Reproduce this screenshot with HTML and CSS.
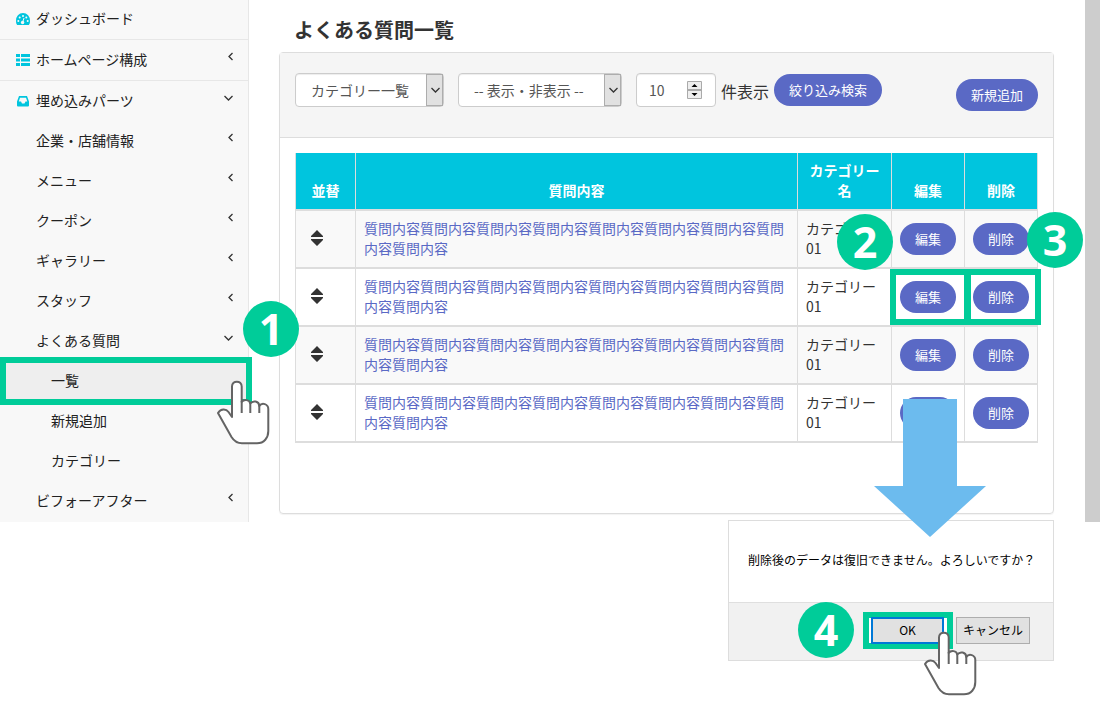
FILE: index.html
```html
<!DOCTYPE html>
<html lang="ja">
  <head>
    <meta charset="UTF-8" />
    <title>よくある質問一覧</title>
    <link rel="stylesheet" href="styles.css" />
  </head>
  <body>
    <svg class="defs" width="0" height="0">
      <symbol id="left" viewBox="0 0 10 10">
        <path d="M9.500 1L6 4.500L9.500 8" fill="none" stroke="#333" stroke-width="1.300" />
      </symbol>
      <symbol id="down" viewBox="0 0 10 10">
        <path d="M1.500 3L5.500 7L9.500 3" fill="none" stroke="#333" stroke-width="1.300" />
      </symbol>
      <symbol id="sort" viewBox="0 0 12 16">
        <path d="M6 0L12 6V7H0V6ZM0 9H12V10L6 16L0 10Z" fill="#333" />
      </symbol>
      <symbol id="hand" viewBox="0 0 54 66">
        <path
          d="M16 37V6.500C16 0 25.700 0 25.700 6.500V22C28 19 33.500 19.500 34.300 23.500C37 20 43 21 43.300 26C46 22 52.300 24 52.300 29V51C52.300 58 48 63.300 41 63.300H26C21 63.300 18 61 15.500 57L2 33C5 28.500 10 28.500 12.500 32Z"
          fill="#fff" stroke="#646464" stroke-width="2" stroke-linejoin="round"
        />
        <path d="M25.700 21V33M34.300 22V33M43.300 24V33" fill="none" stroke="#646464" stroke-width="2" />
      </symbol>
    </svg>

    <div class="app">
      <nav class="sidebar">
        <ul class="menu">
          <li class="menu-item top first">
            <a href="#">
              <svg class="menu-icon" viewBox="0 0 16 14">
                <path d="M8 1A7 7.500 0 0 0 1 9C1 11 1.500 12 2.200 13H13.800C14.500 12 15 11 15 9A7 7.500 0 0 0 8 1Z" fill="#00c5de" />
                <g fill="#f8f8f8">
                  <circle cx="3.300" cy="9" r="1" /><circle cx="4.700" cy="5.600" r="1" />
                  <circle cx="8" cy="4" r="1" /><circle cx="11.300" cy="5.600" r="1" />
                  <circle cx="12.700" cy="9" r="1" /><circle cx="7.600" cy="10.500" r="1.700" />
                </g>
                <path d="M7.600 10.500L9 6" stroke="#f8f8f8" stroke-width="1" />
              </svg>
              ダッシュボード
            </a>
          </li>
          <li class="menu-item top">
            <a href="#">
              <svg class="menu-icon" viewBox="0 0 16 14">
                <path d="M1 1H5V4H1ZM6 1H15V4H6ZM1 5.500H5V8.500H1ZM6 5.500H15V8.500H6ZM1 10H5V13H1ZM6 10H15V13H6Z" fill="#00c5de" />
              </svg>
              ホームページ構成
              <svg class="chevron"><use href="#left" /></svg>
            </a>
          </li>
          <li class="menu-item">
            <a href="#">
              <svg class="menu-icon" viewBox="0 0 16 14">
                <path d="M4 2H12L14 7.500V11.500Q14 12.500 13 12.500H3Q2 12.500 2 11.500V7.500ZM5 3.700L3.800 7.500H6L7 9.500H9.500L10.500 7.500H12.300L11 3.700Z" fill="#00c5de" fill-rule="evenodd" />
              </svg>
              埋め込みパーツ
              <svg class="chevron"><use href="#down" /></svg>
            </a>
          </li>
          <li class="menu-item sub"><a href="#">企業・店舗情報<svg class="chevron"><use href="#left" /></svg></a></li>
          <li class="menu-item sub"><a href="#">メニュー<svg class="chevron"><use href="#left" /></svg></a></li>
          <li class="menu-item sub"><a href="#">クーポン<svg class="chevron"><use href="#left" /></svg></a></li>
          <li class="menu-item sub"><a href="#">ギャラリー<svg class="chevron"><use href="#left" /></svg></a></li>
          <li class="menu-item sub"><a href="#">スタッフ<svg class="chevron"><use href="#left" /></svg></a></li>
          <li class="menu-item sub"><a href="#">よくある質問<svg class="chevron"><use href="#down" /></svg></a></li>
          <li class="menu-item sub2 active">
            <a href="#">一覧</a>
            <span class="mark mark-menu"></span>
            <svg class="hand hand-menu"><use href="#hand" /></svg>
            <span class="step step-1">1</span>
          </li>
          <li class="menu-item sub2"><a href="#">新規追加</a></li>
          <li class="menu-item sub2"><a href="#">カテゴリー</a></li>
          <li class="menu-item sub"><a href="#">ビフォーアフター<svg class="chevron"><use href="#left" /></svg></a></li>
        </ul>
      </nav>

      <main class="main">
        <h1>よくある質問一覧</h1>
        <section class="card">
          <div class="card-header">
            <form class="filters">
              <div class="select-box">
                <select class="select-category" aria-label="カテゴリー">
                  <option>カテゴリー一覧</option>
                </select>
                <span class="select-arrow"><svg><use href="#down" /></svg></span>
              </div>
              <div class="select-box">
                <select class="select-status" aria-label="表示・非表示">
                  <option>-- 表示・非表示 --</option>
                </select>
                <span class="select-arrow"><svg><use href="#down" /></svg></span>
              </div>
              <div class="count-box">
                <div class="number-box">
                  <input type="number" id="count" value="10" />
                  <svg class="spinner" viewBox="0 0 15 18">
                    <path d="M.500 .500H14.500V17.500H.500Z" fill="#eee" stroke="#aaa" />
                    <path d="M0 9H15" stroke="#aaa" stroke-width="2" />
                    <path d="M4.500 6L7.500 3L10.500 6ZM4.500 12L7.500 15L10.500 12Z" fill="#000" />
                  </svg>
                </div>
                <label for="count">件表示</label>
                <button type="button" class="btn">絞り込み検索</button>
              </div>
            </form>
            <button type="button" class="btn">新規追加</button>
          </div>

          <div class="card-body">
            <table>
              <colgroup>
                <col class="col-sort" />
                <col />
                <col class="col-category" />
                <col class="col-edit" />
                <col class="col-delete" />
              </colgroup>
              <thead>
                <tr>
                  <th>並替</th>
                  <th>質問内容</th>
                  <th>カテゴリー名</th>
                  <th>編集</th>
                  <th>削除</th>
                </tr>
              </thead>
              <tbody>
                <tr>
                  <td class="sort"><svg><use href="#sort" /></svg></td>
                  <td><a href="#">質問内容質問内容質問内容質問内容質問内容質問内容質問内容質問内容質問内容</a></td>
                  <td>カテゴリー01</td>
                  <td class="action"><button type="button" class="btn">編集</button><span class="step step-2">2</span></td>
                  <td class="action"><button type="button" class="btn">削除</button><span class="step step-3">3</span></td>
                </tr>
                <tr>
                  <td class="sort"><svg><use href="#sort" /></svg></td>
                  <td><a href="#">質問内容質問内容質問内容質問内容質問内容質問内容質問内容質問内容質問内容</a></td>
                  <td>カテゴリー01</td>
                  <td class="action"><button type="button" class="btn">編集</button><span class="mark mark-edit"></span></td>
                  <td class="action"><button type="button" class="btn">削除</button><span class="mark mark-delete"></span></td>
                </tr>
                <tr>
                  <td class="sort"><svg><use href="#sort" /></svg></td>
                  <td><a href="#">質問内容質問内容質問内容質問内容質問内容質問内容質問内容質問内容質問内容</a></td>
                  <td>カテゴリー01</td>
                  <td class="action"><button type="button" class="btn">編集</button></td>
                  <td class="action"><button type="button" class="btn">削除</button></td>
                </tr>
                <tr>
                  <td class="sort"><svg><use href="#sort" /></svg></td>
                  <td><a href="#">質問内容質問内容質問内容質問内容質問内容質問内容質問内容質問内容質問内容</a></td>
                  <td>カテゴリー01</td>
                  <td class="action">
                    <button type="button" class="btn">編集</button>
                    <svg class="flow-arrow" viewBox="0 0 112 138">
                      <path d="M29 0H83V87H112L56 138L0 87H29Z" fill="#6cbbee" />
                    </svg>
                  </td>
                  <td class="action"><button type="button" class="btn">削除</button></td>
                </tr>
              </tbody>
            </table>
          </div>
        </section>
      </main>
      <div class="scroll-track"></div>
    </div>

    <div class="dialog" role="dialog">
      <p class="dialog-text">削除後のデータは復旧できません。よろしいですか？</p>
      <div class="dialog-footer">
        <div class="ok-box">
          <span class="mark mark-ok"></span>
          <button type="button" class="dialog-btn ok">OK</button>
          <svg class="hand hand-ok"><use href="#hand" /></svg>
          <span class="step step-4">4</span>
        </div>
        <button type="button" class="dialog-btn">キャンセル</button>
      </div>
    </div>
  </body>
</html>
```

FILE: styles.css
```css
* {
  box-sizing: border-box;
}

body {
  margin: 0;
  min-height: 100vh;
  background-color: #fff;
  color: #333;
  font-family: "Noto Sans CJK JP", sans-serif;
  font-size: 14px;
  line-height: 20px;
}

button,
input,
select {
  font-family: inherit;
}

.defs {
  position: absolute;
}

.app {
  display: flex;
}

/* sidebar */
.sidebar {
  width: 249px;
  flex-shrink: 0;
  background-color: #f8f8f8;
  border-right: 1px solid #e7e7e7;
}

.menu {
  list-style: none;
  margin: 0;
  padding: 0;
}

.menu-item {
  position: relative;
}

.menu-item a {
  display: flex;
  align-items: center;
  height: 40px;
  padding: 0 15px 2px;
  color: #222;
  text-decoration: none;
}

.menu-item.top {
  border-bottom: 1px solid #e7e7e7;
}

.menu-item.first a {
  height: 39px;
  padding-bottom: 4px;
}

.menu-item.sub a {
  padding-left: 36px;
}

.menu-item.sub2 a {
  padding-left: 51px;
}

.menu-item.active {
  background-color: #eee;
}

.menu-icon {
  width: 16px;
  height: 14px;
  margin-top: 2px;
  margin-right: 5px;
}

.chevron {
  width: 10px;
  height: 10px;
  margin-left: auto;
  margin-bottom: 4px;
}

/* main */
.main {
  flex: 1;
  min-width: 0;
  padding: 20px 31px 8px 30px;
}

h1 {
  margin: 0 0 12px;
  padding-left: 15px;
  font-size: 20px;
  line-height: 20px;
}

.card {
  border: 1px solid #ddd;
  border-radius: 4px;
  box-shadow: 0 1px 1px rgba(0, 0, 0, 0.05);
}

.card-header {
  display: flex;
  align-items: center;
  justify-content: space-between;
  padding: 20px 15px;
  background-color: #f5f5f5;
  border-bottom: 1px solid #ddd;
}

.filters {
  display: flex;
  gap: 14px;
  margin-bottom: 10px;
}

.select-box,
.number-box {
  position: relative;
}

.select-box select,
.number-box input {
  display: block;
  height: 34px;
  padding: 0 15px;
  border: 1px solid #ccc;
  border-radius: 4px;
  background-color: #fff;
  box-shadow: inset 0 1px 1px rgba(0, 0, 0, 0.075);
  color: #555;
  font-size: 14px;
  appearance: none;
}

.select-box .select-category {
  width: 149px;
}

.select-box .select-status {
  width: 164px;
}

.select-arrow {
  position: absolute;
  top: 1px;
  right: 1px;
  bottom: 1px;
  width: 17px;
  display: flex;
  align-items: center;
  justify-content: center;
  background-color: #e1e1e1;
  border: 1px solid #adadad;
  pointer-events: none;
}

.select-arrow svg {
  width: 10px;
  height: 10px;
}

.count-box {
  display: flex;
  align-items: center;
  gap: 5px;
}

.number-box input {
  width: 80px;
  padding: 0 12px;
  appearance: textfield;
}

.spinner {
  position: absolute;
  top: 8px;
  right: 14px;
  width: 15px;
  height: 18px;
}

.count-box label {
  font-size: 16px;
  padding-top: 2px;
}

.btn {
  display: block;
  height: 32px;
  padding: 0 15px 2px;
  border: none;
  border-radius: 16px;
  background-color: #5a69c5;
  color: #fff;
  font-size: 13px;
  white-space: nowrap;
  cursor: pointer;
}

.card-body {
  padding: 15px 15px 70px;
}

table {
  width: 100%;
  table-layout: fixed;
  border-collapse: separate;
  border-spacing: 0;
}

.col-sort {
  width: 60px;
}

.col-category {
  width: 94px;
}

.col-edit {
  width: 73px;
}

.col-delete {
  width: 74px;
}

th,
td {
  position: relative;
  padding: 7px 8px 9px;
  border-left: 1px solid #ddd;
  border-bottom: 2px solid #ddd;
}

th:last-child,
td:last-child {
  border-right: 1px solid #ddd;
}

th {
  background-color: #00c5de;
  color: #fff;
  vertical-align: bottom;
}

tbody tr:nth-child(odd) {
  background-color: #f9f9f9;
}

td a {
  color: #5a69c5;
  text-decoration: none;
}

td.action {
  padding: 8px;
}

.action .btn {
  width: 56px;
}

.sort svg {
  display: block;
  width: 12px;
  height: 16px;
  margin-left: 7px;
}

.scroll-track {
  width: 15px;
  flex-shrink: 0;
  background-color: #cdcdcd;
}

/* confirm dialog */
.dialog {
  position: relative;
  width: 326px;
  margin: -2px 46px 50px auto;
  background-color: #fff;
  border: 1px solid #ddd;
  color: #000;
  font-size: 12px;
}

.dialog-text {
  margin: 0;
  padding: 29px 0 32px 19px;
  white-space: nowrap;
}

.dialog-footer {
  display: flex;
  justify-content: flex-end;
  gap: 12px;
  padding: 14px 23px 16px;
  background-color: #f1f1f1;
  border-top: 1px solid #dfdfdf;
}

.ok-box {
  position: relative;
}

.dialog-btn {
  position: relative;
  display: block;
  width: 74px;
  height: 27px;
  padding: 0 0 2px;
  border: 1px solid #adadad;
  background-color: #e1e1e1;
  color: #000;
  font-size: 12px;
}

.dialog-btn.ok {
  width: 73px;
  border: 2px solid #0078d7;
  z-index: 3;
}

/* guide marks */
.mark {
  position: absolute;
  z-index: 2;
  border: 6px solid #00cc99;
  pointer-events: none;
}

.mark-menu {
  top: -4px;
  right: -4px;
  bottom: -4px;
  left: 0;
}

.mark-edit {
  top: 0;
  right: -6px;
  bottom: 0;
  left: -2px;
}

.mark-delete {
  top: 0;
  right: -4px;
  bottom: 0;
  left: 0;
}

.mark-ok {
  top: -5px;
  right: -9px;
  bottom: -5px;
  left: -8px;
  background-color: #fff;
}

.step {
  position: absolute;
  z-index: 5;
  width: 56px;
  height: 56px;
  border-radius: 50%;
  background-color: #00cc99;
  color: #fff;
  font-family: "Open Sans", sans-serif;
  font-size: 43px;
  font-weight: bold;
  line-height: 56px;
  text-align: center;
}

.step-1 {
  top: -60px;
  left: 243px;
}

.step-2 {
  top: 3px;
  left: -55px;
}

.step-3 {
  top: 1px;
  left: 62px;
}

.step-4 {
  top: -15px;
  left: -73px;
}

.hand {
  position: absolute;
  z-index: 5;
  width: 54px;
  height: 66px;
}

.hand-menu {
  top: 19px;
  left: 216px;
}

.hand-ok {
  top: 14px;
  left: 52px;
}

.flow-arrow {
  position: absolute;
  z-index: 5;
  top: 14px;
  left: -18px;
  width: 112px;
  height: 138px;
}
```
